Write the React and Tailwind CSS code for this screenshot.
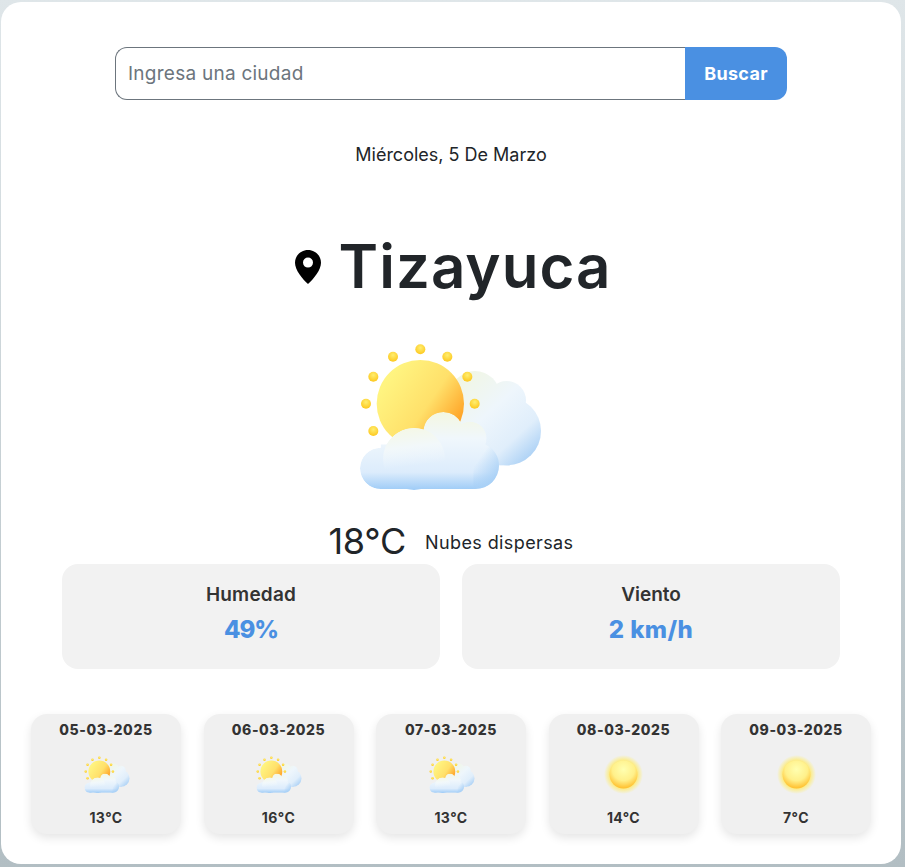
import React from "react";

function Lobes({ kind }) {
  if (kind === "back") {
    return (
      <>
        <circle cx="405" cy="195" r="75" />
        <circle cx="500" cy="208" r="58" />
        <circle cx="500" cy="300" r="103" />
        <rect x="340" y="200" width="170" height="203" />
      </>
    );
  }
  return (
    <>
      <circle cx="310" cy="303" r="60" />
      <circle cx="390" cy="322" r="50" />
      <circle cx="222" cy="384" r="93" />
      <circle cx="122" cy="412" r="62" />
      <circle cx="407" cy="404" r="70" />
      <rect x="122" y="340" width="285" height="134" />
    </>
  );
}

function CloudSun({ id, size }) {
  return (
    <svg width={size} height={size} viewBox="33 -39 600 600" className="block shrink-0">
      <defs>
        <linearGradient id={id + "s"} x1="0.15" y1="0.2" x2="0.95" y2="0.75">
          <stop offset="0" stopColor="#fff480" />
          <stop offset="0.55" stopColor="#ffe06a" />
          <stop offset="1" stopColor="#ff9f22" />
        </linearGradient>
        <radialGradient id={id + "d"} cx="0.5" cy="0.35" r="0.65">
          <stop offset="0" stopColor="#ffee70" />
          <stop offset="1" stopColor="#fdc81e" />
        </radialGradient>
        <linearGradient id={id + "b"} gradientUnits="userSpaceOnUse" x1="360" y1="140" x2="590" y2="390">
          <stop offset="0" stopColor="#f1f6e4" />
          <stop offset="0.4" stopColor="#eef6fc" />
          <stop offset="0.72" stopColor="#e0eefb" />
          <stop offset="1" stopColor="#9fcaf4" />
        </linearGradient>
        <linearGradient id={id + "f"} gradientUnits="userSpaceOnUse" x1="280" y1="240" x2="280" y2="476">
          <stop offset="0" stopColor="#f4f7e0" />
          <stop offset="0.35" stopColor="#f0f7fc" />
          <stop offset="0.78" stopColor="#dcecfc" />
          <stop offset="1" stopColor="#9fccf7" />
        </linearGradient>
        <linearGradient id={id + "r"} gradientUnits="userSpaceOnUse" x1="420" y1="380" x2="478" y2="420">
          <stop offset="0" stopColor="#a8d0f6" stopOpacity="0" />
          <stop offset="1" stopColor="#a8d0f6" stopOpacity="0.9" />
        </linearGradient>
        <linearGradient id={id + "h"} gradientUnits="userSpaceOnUse" x1="200" y1="290" x2="215" y2="405">
          <stop offset="0" stopColor="#f5f8e6" />
          <stop offset="0.5" stopColor="#f2f8fa" />
          <stop offset="1" stopColor="#eef6fd" stopOpacity="0" />
        </linearGradient>
        <clipPath id={id + "cf"}>
          <Lobes kind="front" />
        </clipPath>
      </defs>
      <g fill={`url(#${id}b)`}>
        <Lobes kind="back" />
      </g>
      <circle cx="241" cy="218" r="131" fill={`url(#${id}s)`} />
      <g fill={`url(#${id}d)`}>
        <circle cx="241" cy="55" r="15" />
        <circle cx="159" cy="77" r="15" />
        <circle cx="322" cy="77" r="15" />
        <circle cx="100" cy="137" r="15" />
        <circle cx="382" cy="137" r="15" />
        <circle cx="78" cy="218" r="15" />
        <circle cx="404" cy="218" r="15" />
        <circle cx="100" cy="300" r="15" />
      </g>
      <g clipPath={`url(#${id}cf)`}>
        <g fill={`url(#${id}f)`}>
          <Lobes kind="front" />
        </g>
        <rect x="400" y="320" width="90" height="160" fill={`url(#${id}r)`} />
        <circle cx="222" cy="384" r="93" fill={`url(#${id}h)`} />
      </g>
    </svg>
  );
}

function Sun({ id }) {
  return (
    <svg width="50" height="50" viewBox="0 0 50 50" className="block shrink-0">
      <defs>
        <radialGradient id={id + "g"}>
          <stop offset="0.7" stopColor="#ffe96a" stopOpacity="0.85" />
          <stop offset="1" stopColor="#fff06a" stopOpacity="0" />
        </radialGradient>
        <radialGradient id={id + "c"} cx="0.5" cy="0.32" r="0.72">
          <stop offset="0" stopColor="#ffffb0" />
          <stop offset="0.55" stopColor="#fff08a" />
          <stop offset="1" stopColor="#ffb71f" />
        </radialGradient>
      </defs>
      <circle cx="24.5" cy="24.5" r="19.5" fill={`url(#${id}g)`} />
      <circle cx="24.5" cy="24.5" r="14" fill={`url(#${id}c)`} />
    </svg>
  );
}

const days = [
  ["05-03-2025", "13°C", "cloud"],
  ["06-03-2025", "16°C", "cloud"],
  ["07-03-2025", "13°C", "cloud"],
  ["08-03-2025", "14°C", "sun"],
  ["09-03-2025", "7°C", "sun"],
];

export default function App() {
  return (
    <div className="h-[867px] overflow-hidden bg-gradient-to-b from-[#dfe6e9] to-[#b2bec3] pl-px pt-[2px] font-['Inter','Liberation_Sans',sans-serif]">
      <div className="flex h-[862px] w-[900px] flex-col items-center rounded-[20px] bg-white">
        <div className="mt-[45px] flex h-[53px] w-[672px]">
          <div className="flex flex-1 items-center rounded-l-xl border border-r-0 border-[#6c757d] pl-3 pt-[2px] text-[19px] tracking-[0.25px] text-[#6c757d]">
            Ingresa una ciudad
          </div>
          <div className="flex w-[102px] items-center justify-center rounded-r-xl bg-[#4a90e2] text-[18px] font-bold tracking-[0.3px] text-white">
            Buscar
          </div>
        </div>

        <div className="mt-[43px] text-[18px] leading-[24px] text-[#212529]">Miércoles, 5 De Marzo</div>

        <div className="ml-[4px] mt-[63px] flex h-[72px] items-center gap-[18px]">
          <svg width="26" height="34" viewBox="0 0 26 34" className="mt-[2px]">
            <path
              fillRule="evenodd"
              d="M13 0C5.8 0 0 5.7 0 12.7 0 20 7.6 29 13 34c5.4-5 13-14 13-21.3C26 5.7 20.2 0 13 0Zm0 7.6a5 5 0 1 1 0 10 5 5 0 0 1 0-10Z"
              fill="#000"
            />
          </svg>
          <h1 className="text-[60px] font-semibold leading-[72px] tracking-[1px] text-[#212529]">Tizayuca</h1>
        </div>

        <div className="mt-[16px]">
          <CloudSun id="main" size={200} />
        </div>

        <div className="flex h-[46px] items-center gap-[19px] text-[#212529]">
          <span className="text-[36px] font-normal tracking-[-0.3px]">18°C</span>
          <span className="pt-[2px] text-[18px] tracking-[0.4px]">Nubes dispersas</span>
        </div>

        <div className="flex w-[778px] gap-[22px]">
          <div className="flex h-[105px] flex-1 flex-col items-center rounded-2xl bg-[#f2f2f2] pt-[18px]">
            <div className="text-[19px] font-semibold leading-[26px] tracking-[0.2px] text-[#333]">Humedad</div>
            <div className="mt-[6px] text-[24px] font-extrabold leading-[32px] tracking-[-1px] text-[#4a90e2]">49%</div>
          </div>
          <div className="flex h-[105px] flex-1 flex-col items-center rounded-2xl bg-[#f2f2f2] pt-[18px]">
            <div className="text-[19px] font-semibold leading-[26px] text-[#333]">Viento</div>
            <div className="mt-[6px] text-[24px] font-extrabold leading-[32px] tracking-[0.4px] text-[#4a90e2]">2 km/h</div>
          </div>
        </div>

        <div className="mt-[45px] flex w-[840px] justify-between">
          {days.map(([d, t, k], i) => (
            <div
              key={d}
              className="flex h-[120px] w-[150px] flex-col items-center rounded-2xl bg-[#f0f0f0] shadow-[0_4px_10px_rgba(0,0,0,0.1)]"
            >
              <div className="mt-[5px] text-[14px] font-extrabold leading-[21px] tracking-[0.6px] text-[#333]">{d}</div>
              <div className="ml-[1px] mt-[10px]">
                {k === "cloud" ? <CloudSun id={"c" + i} size={50} /> : <Sun id={"s" + i} />}
              </div>
              <div className="mt-[7px] text-[14px] font-bold leading-[21px] tracking-[0.4px] text-[#333]">{t}</div>
            </div>
          ))}
        </div>
      </div>
    </div>
  );
}
